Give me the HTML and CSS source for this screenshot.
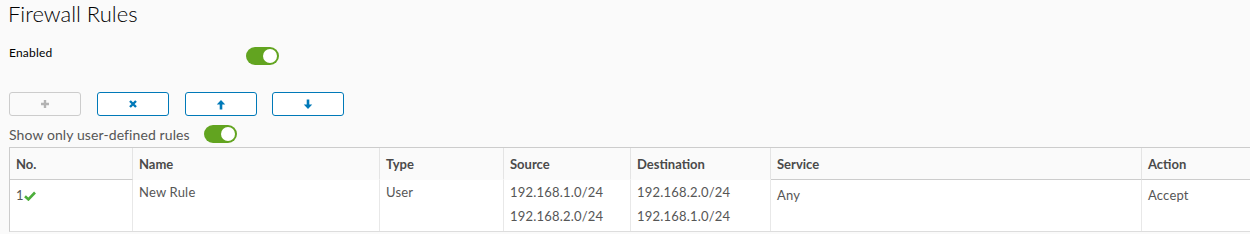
FILE: index.html
```html
<!DOCTYPE html>
<html>
<head>
<meta charset="utf-8">
<link rel="stylesheet" href="styles.css">
</head>
<body>
<div class="page">
  <h2 class="title">Firewall Rules</h2>
  <div class="field">
    <span class="field-label">Enabled</span>
    <span class="toggle"><span class="knob"></span></span>
  </div>
  <div class="toolbar">
    <button class="btn btn-disabled" type="button">
      <svg width="10" height="10" viewBox="0 0 10 10"><path d="M5 1v8M1 5h8" stroke="#b3b3b3" stroke-width="2.4"/></svg>
    </button>
    <button class="btn" type="button">
      <svg width="10" height="10" viewBox="0 0 10 10"><path d="M2 2l6 6M8 2l-6 6" stroke="#0079b8" stroke-width="2.4"/></svg>
    </button>
    <button class="btn" type="button">
      <svg width="10" height="11" viewBox="0 0 10 11"><path d="M5 10.5V4" stroke="#0079b8" stroke-width="2.6"/><path d="M0.8 5.6L5 1l4.2 4.6z" fill="#0079b8"/></svg>
    </button>
    <button class="btn btn-last" type="button">
      <svg width="10" height="11" viewBox="0 0 10 11"><path d="M5 0.5V7" stroke="#0079b8" stroke-width="2.6"/><path d="M0.8 5.4L5 10l4.2-4.6z" fill="#0079b8"/></svg>
    </button>
  </div>
  <div class="filter">
    <span class="filter-label">Show only user-defined rules</span>
    <span class="toggle"><span class="knob"></span></span>
  </div>
  <div class="grid">
    <div class="th th-b">No.</div>
    <div class="th">Name</div>
    <div class="th">Type</div>
    <div class="th">Source</div>
    <div class="th">Destination</div>
    <div class="th th-b">Service</div>
    <div class="th th-b">Action</div>

    <div class="td td-low">1<svg class="check" width="12" height="10" viewBox="0 0 12 10"><path d="M1 5.2l3.4 3.2L11 1.5" stroke="#4cae3b" stroke-width="2.6" fill="none"/></svg></div>
    <div class="td">New Rule</div>
    <div class="td">User</div>
    <div class="td"><div>192.168.1.0/24</div><div>192.168.2.0/24</div></div>
    <div class="td"><div>192.168.2.0/24</div><div>192.168.1.0/24</div></div>
    <div class="td td-low">Any</div>
    <div class="td td-low">Accept</div>
  </div>
</div>
</body>
</html>
```
FILE: styles.css
```css
html, body {
  margin: 0;
  padding: 0;
  background: #fafafa;
  overflow: hidden;
}
body {
  font-family: Lato, "Open Sans", sans-serif;
  color: #565656;
}
.page {
  padding: 0 0 0 9px;
  width: 1300px;
}
.title {
  margin: 0 0 0 -1px;
  font-size: 22px;
  line-height: 28px;
  font-weight: 300;
  color: #000;
}
.field {
  display: flex;
  align-items: center;
  margin-top: 19px;
  height: 18px;
}
.field-label {
  width: 237px;
  font-size: 12px;
  font-weight: 400;
  color: #000;
  position: relative;
  top: -4px;
  letter-spacing: 0.2px;
}
.toggle {
  display: inline-flex;
  justify-content: flex-end;
  align-items: center;
  width: 33px;
  height: 18px;
  border-radius: 9px;
  background: #62a420;
  box-sizing: border-box;
  padding: 2px;
}
.knob {
  width: 14px;
  height: 14px;
  border-radius: 50%;
  background: #fff;
}
.toolbar {
  display: flex;
  gap: 16px;
  margin-top: 27px;
}
.btn {
  width: 72px;
  height: 24px;
  border: 1px solid #0079b8;
  border-radius: 3px;
  background: #fff;
  display: flex;
  align-items: center;
  justify-content: center;
  padding: 0;
}
.btn-last {
  margin-left: -1px;
}
.btn-disabled {
  border-color: #cccccc;
  background: #fafafa;
}
.filter {
  display: flex;
  align-items: center;
  margin-top: 9px;
  height: 18px;
}
.filter-label {
  font-size: 14px;
  width: 195px;
  color: #565656;
  letter-spacing: 0.1px;
}
.grid {
  display: grid;
  grid-template-columns: 123px 247px 124px 127px 140px 371px 150px;
  margin-top: 4px;
  border-top: 1px solid #cccccc;
  border-left: 1px solid #cccccc;
  border-bottom: 1px solid #dddddd;
  font-size: 13px;
}
.th {
  height: 31px;
  padding: 0 6px;
  line-height: 32px;
  font-weight: 700;
  color: #4a4a4a;
  background: #fafafa;
  border-bottom: 1px solid transparent;
  border-right: 1px solid #e4e4e4;
}
.th-b {
  border-bottom-color: #cccccc;
}
.grid > :nth-child(7n) {
  border-right: none;
}
.td {
  background: #fff;
  padding: 0 6px;
  line-height: 24px;
  height: 51px;
  border-right: 1px solid #e8e8e8;
  letter-spacing: 0.2px;
}
.td-low {
  padding-top: 3px;
  height: 48px;
}
.check {
  margin-left: 0;
  vertical-align: -1px;
}
```
